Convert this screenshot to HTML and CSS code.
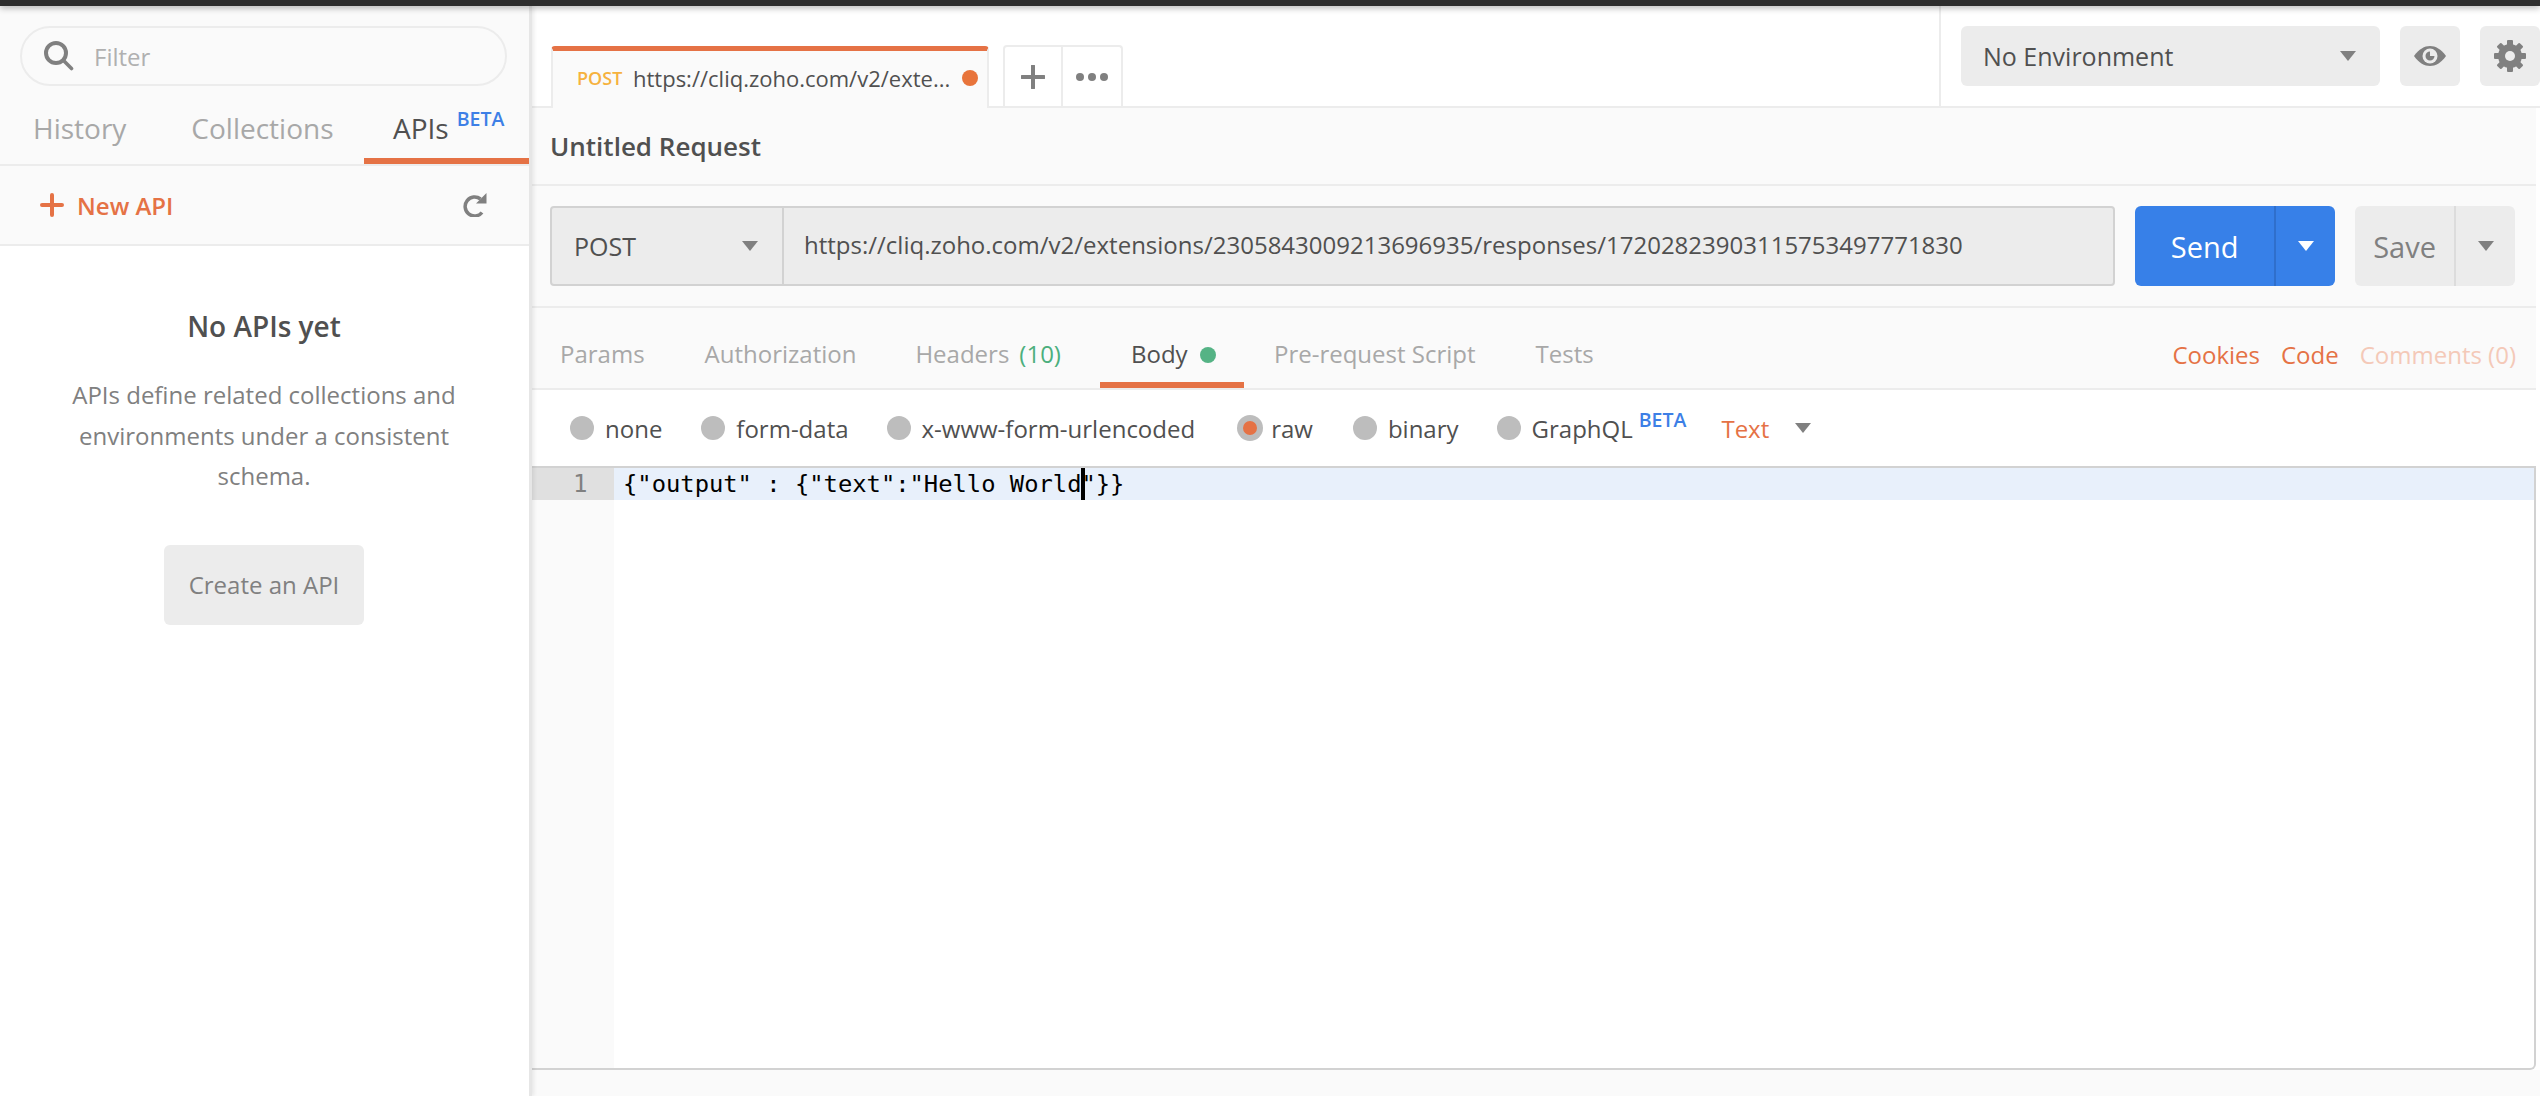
FILE: index.html
```html
<!DOCTYPE html>
<html lang="en">
<head>
<meta charset="utf-8">
<title>Postman</title>
<link rel="stylesheet" href="styles.css">
</head>
<body>
<div class="topbar"></div>
<div class="app">
  <aside class="sidebar">
    <div class="sidebar-head">
      <div class="filter">
        <svg class="filter-icon" viewBox="0 0 30 30" width="30" height="30"><circle cx="12" cy="12" r="10" fill="none" stroke="#808080" stroke-width="4"/><path d="M19.500 19.500l8 8" stroke="#808080" stroke-width="3.600" stroke-linecap="round"/></svg>
        <span class="filter-text">Filter</span>
      </div>
      <nav class="side-tabs">
        <span class="side-tab st-history">History</span>
        <span class="side-tab st-coll">Collections</span>
        <span class="side-tab st-apis"><span class="dark">APIs</span><sup class="beta">BETA</sup></span>
      </nav>
    </div>
    <div class="new-row">
      <span class="new-api"><svg viewBox="0 0 24 24" width="24" height="24"><path d="M12 2v20M2 12h20" stroke="#e57245" stroke-width="4" stroke-linecap="round"/></svg>New API</span>
      <svg class="refresh" viewBox="0 0 24 24" width="24" height="24"><path d="M19 19.500A9.500 9.500 0 1 1 17.500 6" fill="none" stroke="#808080" stroke-width="3.500"/><path d="M23.500 0v10.500H13z" fill="#808080"/></svg>
    </div>
    <div class="empty">
      <h2 class="empty-title">No APIs yet</h2>
      <p class="empty-text">APIs define related collections and environments under a consistent schema.</p>
      <span class="btn-create">Create an API</span>
    </div>
  </aside>
  <main class="main">
    <header class="tabbar">
      <div class="tabs">
        <div class="tab">
          <span class="tab-method">POST</span>
          <span class="tab-url">https://cliq.zoho.com/v2/exte...</span>
          <span class="tab-dot"></span>
        </div>
        <div class="tab-actions">
          <span class="tab-action plus"><svg viewBox="0 0 24 24" width="24" height="24"><path d="M12 1v22M1 12h22" stroke="#808080" stroke-width="4" stroke-linecap="round"/></svg></span>
          <span class="tab-action"><svg viewBox="0 0 32 10" width="32" height="10"><circle cx="4" cy="5" r="4" fill="#808080"/><circle cx="16" cy="5" r="4" fill="#808080"/><circle cx="28" cy="5" r="4" fill="#808080"/></svg></span>
        </div>
      </div>
      <div class="env">
        <div class="env-select"><span>No Environment</span><i class="caret"></i></div>
        <span class="icon-btn"><svg viewBox="0 0 32 20" width="32" height="20"><path d="M0 10C5 3 10.500 0 16 0s11 3 16 10c-5 7-10.500 10-16 10S5 17 0 10z" fill="#808080"/><circle cx="16" cy="10" r="7.500" fill="#ececec"/><path d="M16 5.500a4.500 4.500 0 1 0 4.500 4.500H16z" fill="#808080"/></svg></span>
        <span class="icon-btn"><svg viewBox="0 0 32 32" width="32" height="32"><g fill="#808080"><rect x="13" y="0" width="6" height="32" rx="1"/><rect x="13" y="0" width="6" height="32" rx="1" transform="rotate(45 16 16)"/><rect x="13" y="0" width="6" height="32" rx="1" transform="rotate(90 16 16)"/><rect x="13" y="0" width="6" height="32" rx="1" transform="rotate(135 16 16)"/></g><circle cx="16" cy="16" r="8.500" fill="none" stroke="#808080" stroke-width="7"/><circle cx="16" cy="16" r="5" fill="#ececec"/></svg></span>
      </div>
    </header>
    <section class="panel">
      <div class="title-row">Untitled Request</div>
      <div class="url-row">
        <div class="url-box">
          <div class="method"><span>POST</span><i class="caret"></i></div>
          <div class="url">https://cliq.zoho.com/v2/extensions/2305843009213696935/responses/17202823903115753497771830</div>
        </div>
        <div class="split send"><span class="split-main">Send</span><span class="split-arrow"><i class="caret white"></i></span></div>
        <div class="split save"><span class="split-main">Save</span><span class="split-arrow"><i class="caret"></i></span></div>
      </div>
      <div class="req-tabs">
        <span class="req-tab rt-params">Params</span>
        <span class="req-tab rt-auth">Authorization</span>
        <span class="req-tab rt-head">Headers<span class="green">(10)</span></span>
        <span class="req-tab rt-body">Body<span class="green-dot"></span></span>
        <span class="req-tab rt-pre">Pre-request Script</span>
        <span class="req-tab rt-tests">Tests</span>
        <span class="req-links"><span class="orange">Cookies</span><span class="orange">Code</span><span class="faded">Comments (0)</span></span>
      </div>
    </section>
    <section class="body-panel">
      <div class="body-types">
        <label class="radio r-none"><i></i>none</label>
        <label class="radio r-form"><i></i>form-data</label>
        <label class="radio r-url"><i></i>x-www-form-urlencoded</label>
        <label class="radio r-raw on"><i></i>raw</label>
        <label class="radio r-bin"><i></i>binary</label>
        <label class="radio r-gql"><i></i><span>GraphQL<sup class="beta small">BETA</sup></span></label>
        <span class="type-select">Text<i class="caret"></i></span>
      </div>
      <div class="editor">
        <div class="gutter"><span class="line-no">1</span></div>
        <div class="code"><div class="code-line"><span>{"output" : {"text":"Hello World</span><span class="cursor"></span><span>"}}</span></div></div>
      </div>
    </section>
    <div class="footer"></div>
  </main>
</div>
</body>
</html>
```
FILE: styles.css
```css
* { box-sizing: border-box; }
html, body { margin: 0; height: 100%; }
body { width: 2540px; height: 1096px; overflow: hidden; background: #fff; font-family: "Open Sans", sans-serif; color: #505050; }
.topbar { height: 6px; background: #2e2e2e; box-shadow: 0 2px 6px rgba(0,0,0,.3); position: relative; z-index: 2; }
.app { display: flex; height: 1090px; }
.sidebar { width: 532px; flex: none; border-right: 3px solid #e6e6e6; background: #fff; box-shadow: 2px 0 4px rgba(0,0,0,.08); position: relative; z-index: 1; }
.sidebar-head { background: #fafafa; height: 160px; border-bottom: 2px solid #ececec; padding: 20px 0 0; }
.filter { margin: 0 22px 0 20px; height: 60px; border: 2px solid #ececec; border-radius: 30px; display: flex; align-items: center; padding-left: 22px; }
.filter-text { margin-left: 20px; font-size: 24px; color: #b0b0b0; }
.filter-icon { flex: none; }
.side-tabs { display: flex; height: 78px; }
.side-tab { font-size: 28px; color: #a8a8a8; padding-top: 23px; line-height: 38px; }
.st-history { margin-left: 33px; }
.st-coll { margin-left: 65px; }
.st-apis { margin-left: auto; width: 165px; padding-left: 29px; border-bottom: 6px solid #e57245; white-space: nowrap; }
.dark { color: #505050; }
.beta { font-size: 19.500px; font-weight: 600; color: #3d7fe6; margin-left: 8px; vertical-align: 13px; line-height: 0; }
.new-row { height: 80px; background: #fafafa; border-bottom: 2px solid #ececec; display: flex; align-items: center; justify-content: space-between; padding: 0 42px 0 40px; }
.new-api { display: flex; align-items: center; gap: 13px; font-size: 24px; font-weight: 600; color: #e57245; }
.empty { display: flex; flex-direction: column; align-items: center; padding: 0 41px 0 40px; }
.empty-title { margin: 61px 0 0; font-size: 28px; line-height: 38px; font-weight: 600; color: #505050; }
.empty-text { margin: 30px 0 0; font-size: 24px; line-height: 40.500px; text-align: center; color: #808080; }
.btn-create { margin-top: 48px; width: 200px; height: 80px; border-radius: 6px; background: #ececec; color: #808080; font-size: 24px; display: flex; align-items: center; justify-content: center; }
.main { flex: 1; min-width: 0; display: flex; flex-direction: column; }
.tabbar { height: 102px; display: flex; justify-content: space-between; border-bottom: 2px solid #ececec; background: #fff; flex: none; }
.tabs { display: flex; align-items: flex-end; padding-left: 19px; gap: 14px; }
.tab { width: 438px; height: 62px; margin-bottom: -2px; background: #fafafa; border: 2px solid #ececec; border-top: 5px solid #e57245; border-bottom: 0; border-radius: 4px 4px 0 0; display: flex; align-items: center; padding: 0 0 4px 24px; position: relative; }
.tab-method { font-size: 18px; font-weight: 600; color: #f6b23e; width: 56px; flex: none; }
.tab-url { font-size: 22px; color: #505050; white-space: nowrap; }
.tab-dot { position: absolute; right: 9px; top: 19px; width: 16px; height: 16px; border-radius: 50%; background: #e8743b; }
.tab-actions { display: flex; height: 61px; border: 2px solid #ececec; border-bottom: 0; border-radius: 4px 4px 0 0; }
.tab-action { width: 58px; display: flex; align-items: center; justify-content: center; }
.tab-action.plus { border-right: 2px solid #ececec; }
.env { width: 601px; flex: none; border-left: 2px solid #ececec; display: flex; align-items: flex-start; padding: 20px 0 0 20px; gap: 20px; }
.env-select { width: 420px; height: 60px; background: #ececec; border-radius: 6px; display: flex; align-items: center; justify-content: space-between; padding: 0 24px 0 22px; font-size: 25px; font-weight: 500; color: #505050; }
.icon-btn { width: 60px; height: 60px; background: #ececec; border-radius: 6px; display: flex; align-items: center; justify-content: center; }
.caret { display: inline-block; width: 0; height: 0; border-left: 8px solid transparent; border-right: 8px solid transparent; border-top: 10px solid #808080; }
.caret.white { border-top-color: #fff; }
.panel { background: #fafafa; margin-right: 4px; flex: none; }
.title-row { height: 78px; padding: 0 0 0 18px; font-size: 26px; font-weight: 600; line-height: 76px; color: #505050; border-bottom: 2px solid #ececec; }
.url-row { display: flex; padding: 20px 21px 20px 18px; height: 122px; border-bottom: 2px solid #ececec; }
.url-box { width: 1566px; height: 80px; display: flex; background: #ececec; border: 2px solid #d2d2d2; border-radius: 4px; }
.method { width: 232px; flex: none; border-right: 2px solid #d2d2d2; display: flex; align-items: center; justify-content: space-between; padding: 0 24px 0 22px; font-size: 25px; font-weight: 500; color: #505050; }
.url { flex: 1; display: flex; align-items: center; padding: 0 0 4px 20px; font-size: 24px; color: #505050; white-space: nowrap; overflow: hidden; }
.split { display: flex; height: 80px; border-radius: 6px; margin-left: 20px; }
.split-main { display: flex; align-items: center; justify-content: center; font-size: 29px; font-weight: 500; }
.split-arrow { display: flex; align-items: center; justify-content: center; border-left: 2px solid; }
.send { width: 200px; background: #3780e8; color: #fff; }
.send .split-main { width: 139px; }
.send .split-arrow { flex: 1; border-color: #2f6fcc; }
.save { width: 160px; background: #ececec; color: #808080; margin-left: 20px; }
.save .split-main { width: 99px; }
.save .split-arrow { flex: 1; border-color: #dcdcdc; }
.req-tabs { height: 82px; display: flex; border-bottom: 2px solid #ececec; position: relative; }
.req-tab { font-size: 24px; line-height: 34px; padding-top: 29px; color: #a8a8a8; }
.rt-params { margin-left: 28px; }
.rt-auth { margin-left: 60px; }
.rt-head { margin-left: 59px; }
.green { color: #4caf7d; margin-left: 10px; }
.rt-body { margin-left: 39px; width: 144px; padding-left: 31px; color: #505050; border-bottom: 6px solid #e57245; display: flex; align-items: flex-start; }
.green-dot { width: 16px; height: 16px; border-radius: 50%; background: #55b385; margin: 10px 0 0 12px; }
.rt-pre { margin-left: 30px; }
.rt-tests { margin-left: 60px; }
.req-links { position: absolute; right: 20px; top: 0; display: flex; gap: 21px; font-size: 24px; line-height: 34px; padding-top: 30px; }
.orange { color: #e57245; }
.faded { color: #f4c9b8; }
.body-panel { flex: none; margin-right: 4px; }
.body-types { height: 76px; display: flex; align-items: center; padding-left: 38px; font-size: 24px; color: #505050; }
.radio { display: flex; align-items: center; }
.radio i { width: 24px; height: 24px; border-radius: 50%; background: #bdbdbd; margin-right: 11px; }
.radio.on i { width: 26px; height: 26px; margin-right: 8px; display: flex; align-items: center; justify-content: center; }
.radio.on i::after { content: ""; width: 14px; height: 14px; border-radius: 50%; background: #e57245; }
.r-form { margin-left: 39px; }
.r-url { margin-left: 38px; }
.r-raw { margin-left: 42px; }
.r-bin { margin-left: 40px; }
.r-gql { margin-left: 38px; }
.beta.small { margin-left: 6px; vertical-align: 11px; }
.type-select { margin-left: 35px; color: #e57245; display: flex; align-items: center; gap: 26px; }
.editor { height: 604px; display: flex; border: 2px solid #d2d2d2; border-left: 0; border-radius: 0 0 6px 0; background: #fff; }
.gutter { width: 82px; flex: none; background: #fafafa; }
.line-no { display: block; height: 32px; background: #e0e0e0; font-family: "DejaVu Sans Mono", monospace; font-size: 24px; line-height: 32px; color: #808080; padding-left: 41px; }
.code { flex: 1; }
.code-line { height: 32px; background: #e8f0fb; padding-left: 9px; font-family: "DejaVu Sans Mono", monospace; font-size: 23.800px; line-height: 32px; color: #000; white-space: pre; display: flex; }
.cursor { width: 4px; margin-right: -4px; background: #000; }
.footer { flex: 1; background: #fafafa; }
```
